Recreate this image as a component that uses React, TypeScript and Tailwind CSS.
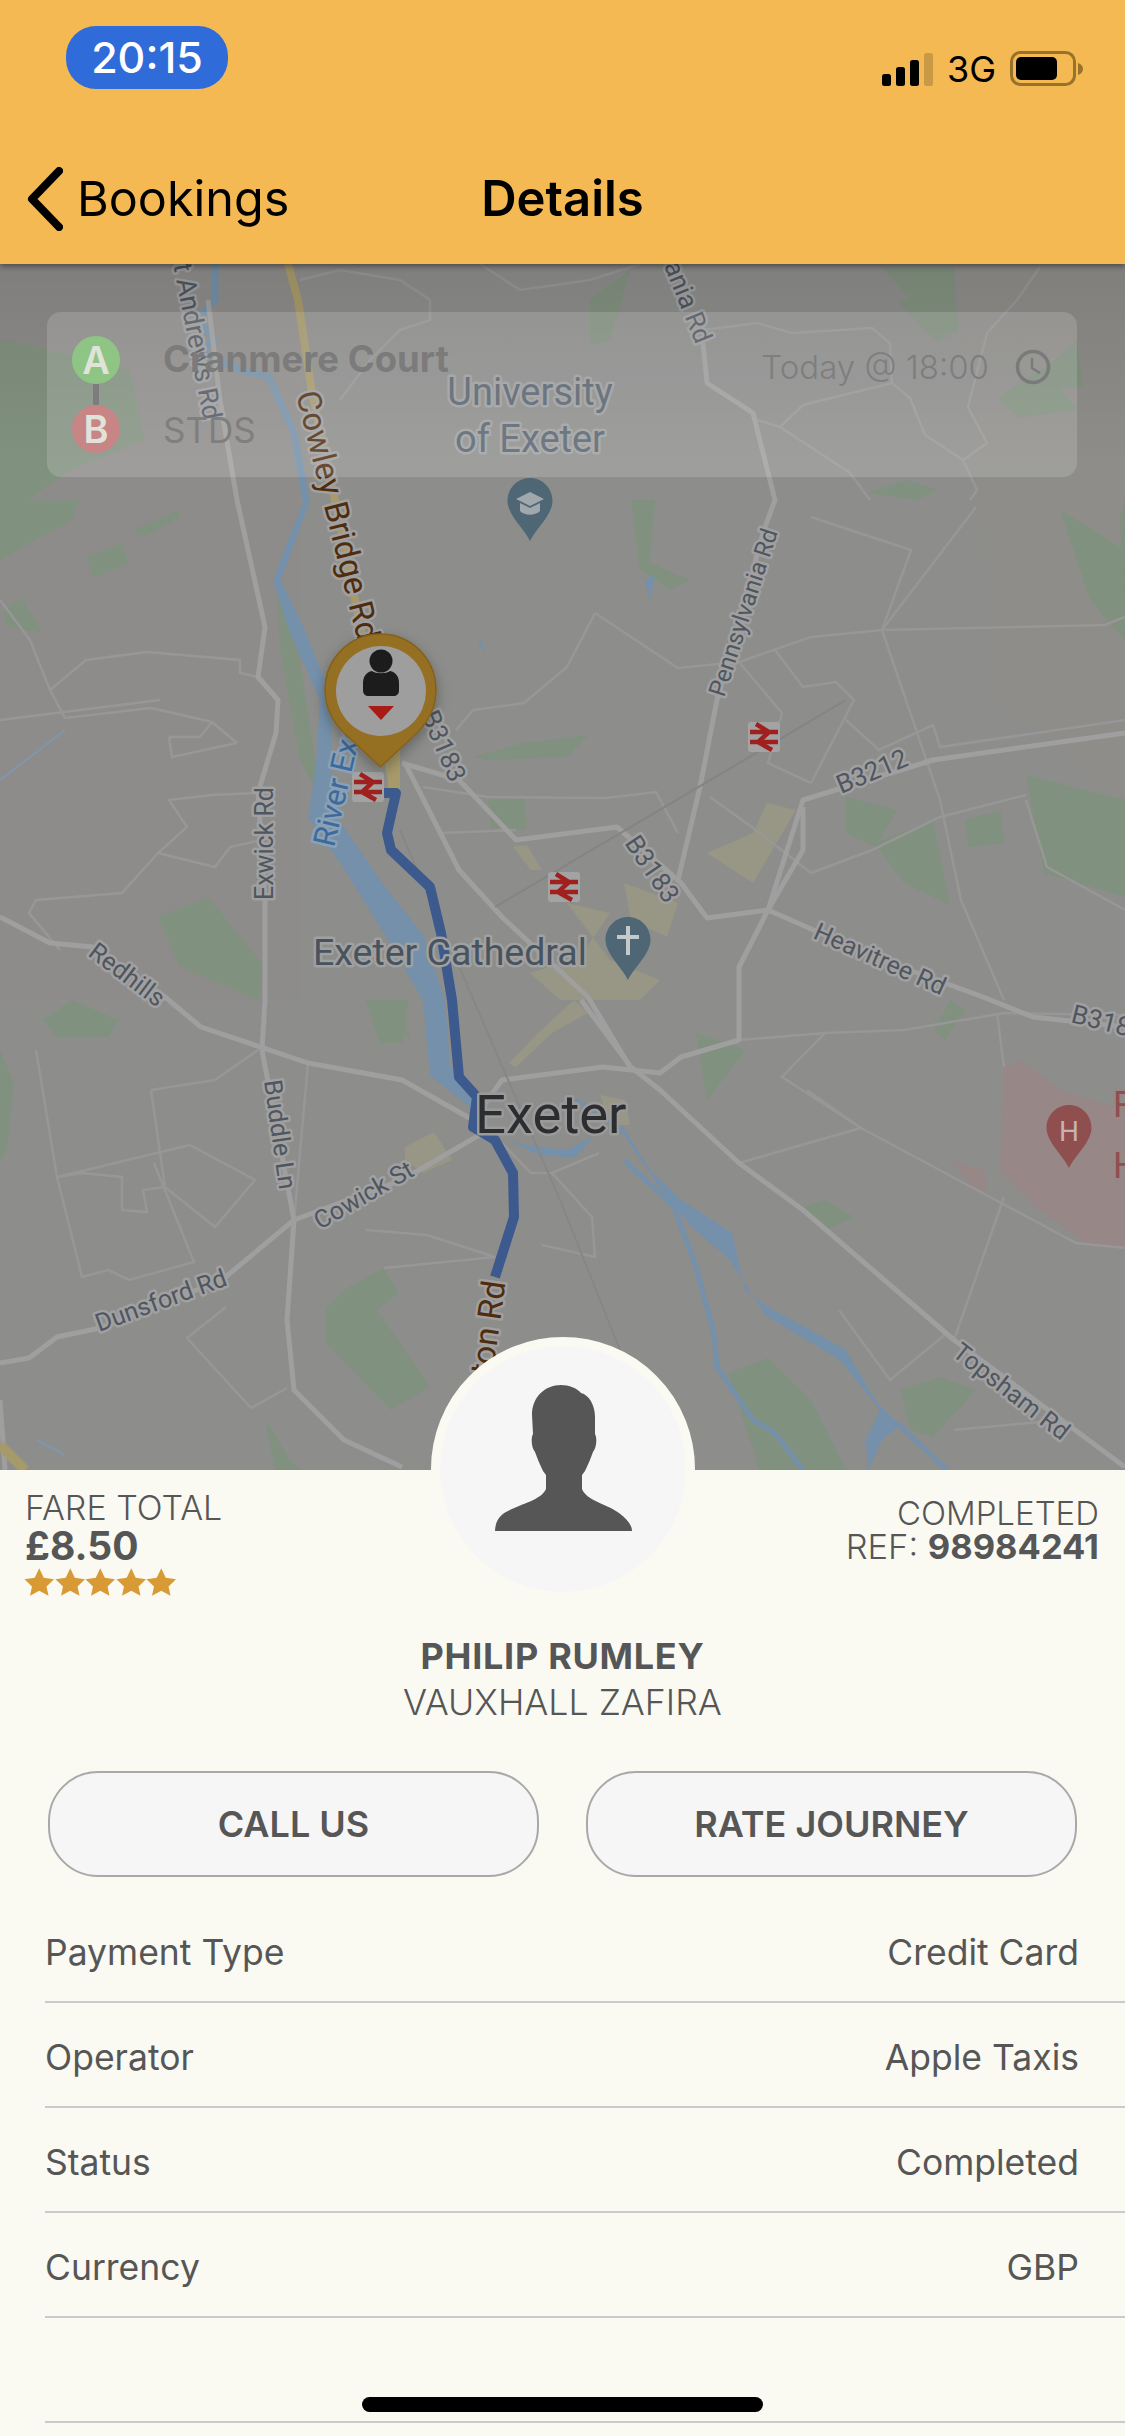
const rows = [
  { label: "Payment Type", value: "Credit Card" },
  { label: "Operator", value: "Apple Taxis" },
  { label: "Status", value: "Completed" },
  { label: "Currency", value: "GBP" },
  { label: "", value: "" },
];

// map shapes use screen coordinates, the svg viewBox starts at the map's top
const greens = [
  "0,340 30,345 130,370 145,440 70,470 0,520",
  "0,500 79,500 72,520 0,560",
  "86,557 122,543 129,563 93,578",
  "133,530 179,510 179,517 143,537",
  "4,610 22,598 43,633 7,627",
  "276,570 300,660 312,740 322,800 300,760 280,650",
  "631,500 655,500 650,563 690,580 670,590 640,570",
  "1060,510 1125,550 1125,640 1090,600",
  "846,797 897,810 875,847 846,833",
  "875,843 933,820 950,905 904,883",
  "965,820 1001,810 1004,843 968,847",
  "1026,775 1125,800 1125,897 1044,873",
  "488,800 524,798 527,830 491,828",
  "473,757 524,743 588,735 567,757 488,760",
  "158,917 208,897 265,967 258,1000 180,967",
  "43,1020 72,1000 118,1020 108,1037 57,1037",
  "344,1290 384,1268 398,1293 377,1310 430,1387 391,1410 326,1343 326,1308",
  "728,1373 768,1358 811,1400 846,1470 760,1470",
  "900,1390 940,1377 976,1390 933,1437 911,1430",
  "803,1207 825,1200 854,1217 825,1230",
  "696,1033 746,1050 707,1100",
  "0,1050 14,1083 7,1150 0,1160",
  "366,1000 409,1000 402,1043 380,1043",
  "882,267 954,267 958,333 911,300",
  "897,300 947,300 960,327 937,343",
  "998,398 1023,380 1047,367 1077,340 1083,387 1060,388 1077,410 1018,418",
  "867,493 907,480 937,490 917,500",
  "265,1420 290,1460 300,1470 275,1470",
  "590,300 630,270 610,340 590,345",
  "950,1000 965,1010 945,1040 935,1030",
  "1120,520 1125,500 1125,600",
  "385,1010 400,1000 410,1040",
];

const beiges = [
  "767,803 796,810 753,883 707,853 753,833",
  "513,847 527,845 542,870 531,870",
  "624,883 678,903 667,937 631,920",
  "567,903 610,913 580,957 530,973 560,1000 640,1000 660,980 610,960",
  "538,1033 574,1000 588,1013 552,1033 516,1067 509,1063",
  "405,1147 434,1132 452,1160 423,1173 405,1160",
  "600,1095 625,1100 630,1125 610,1125",
];

const mainRoads = [
  "237,500 265,627 258,677 278,700 276,733 258,793 265,900 265,1000 262,1050 294,1220 287,1320 294,1390 344,1440 402,1467",
  "208,300 220,400 237,500",
  "0,917 50,943 93,947 165,997 201,1027 308,1063 402,1080 473,1120",
  "0,1363 29,1358 57,1337 100,1328 222,1280 294,1220 402,1180 488,1130",
  "402,763 459,780 516,840 617,827 681,883 707,918 768,910 882,960 983,997 1033,1017 1125,1027",
  "768,910 803,800 933,760 1125,733",
  "803,807 803,850 768,910 739,967 739,1040 681,1057 660,1073 603,1067 502,1080 473,1120",
  "581,1000 631,1067 660,1090 739,1163 803,1210 954,1340 1125,1467",
  "703,343 707,383 753,413 775,500 764,530 717,700 700,787 678,880",
  "405,763 459,870 502,917 588,997 630,1067",
  "0,1400 5,1470",
];

const thinRoads = [
  "50,690 86,660 147,652 240,660 240,673 258,677",
  "50,690 65,718 151,708 212,722 237,743",
  "169,737 172,757 237,743",
  "212,722 200,737 169,737",
  "258,793 212,795 169,800 187,827 158,853 215,867 230,847 262,840",
  "158,853 122,893 36,900 29,913 60,950",
  "757,420 780,427 803,405 892,383 910,398 925,435 963,460 987,443 968,407 987,333 1017,300",
  "780,427 850,473 870,500",
  "703,330 757,323 792,333 872,328 890,343 892,383",
  "963,460 977,490 970,500",
  "739,662 811,637 882,630 1105,625 1125,617",
  "882,630 911,550 811,517",
  "882,630 976,507",
  "882,630 940,800 961,900 1004,1000",
  "1026,800 1047,867 1125,910",
  "595,613 678,668 739,662",
  "595,613 567,667 524,703 473,710 456,730",
  "739,662 782,713 768,763 811,783",
  "775,650 803,687 836,682 854,700 811,783",
  "846,720 879,750 933,725 940,747 1125,720",
  "423,787 488,797 606,798 656,792 678,833",
  "441,833 516,830",
  "710,797 760,833 811,873 872,850 940,817 1026,795",
  "151,1090 215,1080 258,1050",
  "151,1090 165,1187 143,1190 147,1212 122,1210 122,1177 82,1173 57,1177 36,1050",
  "190,1145 57,1177",
  "190,1145 255,1180 215,1227 165,1187",
  "57,1177 82,1277 108,1270 129,1280 194,1262 154,1163",
  "308,1063 294,1220",
  "427,1235 495,1257 384,1268",
  "427,1235 366,1230",
  "542,1245 595,1257 592,1217 552,1173 531,1173 502,1143",
  "599,1153 552,1173",
  "861,1128 739,1163",
  "861,1128 990,1197 1076,1243 1125,1248",
  "807,1090 861,1128 782,1077 825,1033 739,1040",
  "825,1033 904,1030 1004,1013 1125,1015",
  "1004,1067 997,1013",
  "1004,1197 954,1340",
  "226,1307 187,1338 251,1408 287,1388",
  "839,1310 890,1380 947,1333",
  "1062,1420 954,1430",
  "160,700 0,720",
  "0,600 30,640 50,690",
  "1017,300 1040,267",
  "300,280 340,270 400,280 430,300 430,320 400,330 370,360 340,400",
  "480,264 520,290 590,280 640,264",
];

const label = "font-[Roboto,'Liberation_Sans',sans-serif]";

const MapLabel = ({ x, y, r = 0, size = 25, fill = "#4f5660", anchor = "middle", halo = "#a0a0a0", children }: any) => (
  <text
    x={x}
    y={y}
    transform={`rotate(${r} ${x} ${y})`}
    fontSize={size}
    fill={fill}
    textAnchor={anchor}
    stroke={halo}
    strokeWidth={5}
    strokeLinejoin="round"
    paintOrder="stroke"
    className={label}
  >
    {children}
  </text>
);

const Rail = ({ x, y }: { x: number; y: number }) => (
  <g transform={`translate(${x} ${y})`}>
    <rect x="-16" y="-15" width="32" height="30" rx="3" fill="#a3a3a3" />
    <path d="M-14 -5H14M-14 5H14M-8 -13L5 -5L-6 5L8 13" stroke="#a01f1f" strokeWidth="4.5" fill="none" />
  </g>
);

const Teardrop = ({ x, y, fill }: { x: number; y: number; fill: string }) => (
  <path
    d={`M${x} ${y}c-12.500 0-22.500 10-22.500 23 0 14 17 28 22.500 40 5.500-12 22.500-26 22.500-40 0-13-10-23-22.500-23z`}
    fill={fill}
  />
);

const MapCanvas = () => (
  <svg viewBox="0 264 1125 1206" className="block h-full w-full">
    <defs>
      <linearGradient id="mapShade" x1="0" y1="0" x2="0" y2="1">
        <stop offset="0" stopColor="#000" stopOpacity="0.1" />
        <stop offset="1" stopColor="#000" stopOpacity="0" />
      </linearGradient>
      <filter id="pinShadow" x="-30%" y="-30%" width="160%" height="160%">
        <feDropShadow dx="0" dy="5" stdDeviation="7" floodColor="#000" floodOpacity="0.3" />
      </filter>
    </defs>
    <rect x="0" y="264" width="1125" height="1206" fill="#8d8d8c" />
    {/* warm washes of the land */}
    <polygon points="0,264 300,264 300,1000 0,1000" fill="#908d86" opacity="0.4" />
    <polygon points="960,264 1125,264 1125,800 1000,700" fill="#908e86" opacity="0.4" />
    <polygon points="1004,1067 1020,1060 1060,1090 1125,1110 1125,1250 1090,1245 1040,1210 1000,1170" fill="#978787" />
    <polygon points="954,1163 986,1170 986,1193 975,1190" fill="#978787" />
    {greens.map((p) => (
      <polygon key={p} points={p} fill="#81917f" />
    ))}
    {beiges.map((p) => (
      <polygon key={p} points={p} fill="#989785" />
    ))}
    {/* river */}
    <polyline points="215,264 215,300 197,320 215,340 200,350 240,370 269,377 294,433 306,500" fill="none" stroke="#7490aa" strokeWidth="7" strokeLinejoin="round" />
    <polygon points="304,500 273,580 290,633 320,700 316,767 308,817 345,870 385,935 423,1000 430,1075 473,1110 490,1115 450,1065 445,1000 423,935 380,880 337,817 330,767 333,700 306,633 281,580 310,500" fill="#7490aa" />
    <polygon points="505,1140 525,1145 567,1150 595,1135 575,1158 540,1155" fill="#7490aa" />
    <polygon points="567,1095 590,1105 624,1128 650,1170 681,1200 732,1233 745,1290 768,1307 846,1350 875,1400 900,1425 882,1440 868,1470 866,1440 880,1410 840,1360 765,1315 730,1260 690,1225 665,1195 624,1135" fill="#7490aa" />
    <polyline points="624,1160 674,1207 696,1267 714,1333 717,1367 753,1420 775,1433 803,1470" fill="none" stroke="#7490aa" strokeWidth="5" />
    <polyline points="897,1423 947,1470" fill="none" stroke="#7490aa" strokeWidth="5" />
    <polyline points="0,780 65,730" fill="none" stroke="#7f97ad" strokeWidth="2" />
    <polyline points="37,1440 65,1455" fill="none" stroke="#7f97ad" strokeWidth="2" />
    <polygon points="645,580 655,575 650,600" fill="#7490aa" />
    <polygon points="480,640 485,650 486,652 478,645" fill="#7490aa" />

    {thinRoads.map((p) => (
      <polyline key={p} points={p} fill="none" stroke="#979797" strokeWidth="2.500" />
    ))}
    {mainRoads.map((p) => (
      <polyline key={p} points={p} fill="none" stroke="#9f9f9f" strokeWidth="5" strokeLinejoin="round" />
    ))}
    <polyline points="495,907 846,700" fill="none" stroke="#848484" strokeWidth="2" />
    <polyline points="400,830 560,1200 640,1400" fill="none" stroke="#878787" strokeWidth="2" />

    {/* yellow A road */}
    <polyline points="288,264 298,300 312,393 335,500 365,650 392,780" fill="none" stroke="#a79a6a" strokeWidth="8" />
    <polyline points="394,750 394,795" fill="none" stroke="#a79a6a" strokeWidth="12" />
    <polyline points="0,1445 25,1470" fill="none" stroke="#a79a6a" strokeWidth="10" />

    {/* route */}
    <polyline
      points="383,793 396,793 387,833 391,850 430,887 441,933 452,1000 459,1077 477,1097 473,1127 495,1140 513,1173 514,1217 495,1277"
      fill="none"
      stroke="#3d5a8f"
      strokeWidth="10"
      strokeLinejoin="round"
    />

    <MapLabel x={187} y={335} r={79} size={27}>St Andrews Rd</MapLabel>
    <MapLabel x={327} y={518} r={76} size={33} fill="#4e2c0d">Cowley Bridge Rd</MapLabel>
    <MapLabel x={696} y={345} r={68} size={26} anchor="end">Pennsylvania Rd</MapLabel>
    <MapLabel x={724} y={698} r={-72} size={24} anchor="start">Pennsylvania Rd</MapLabel>
    <MapLabel x={421} y={715} r={67} size={26} anchor="start" >B3183</MapLabel>
    <MapLabel x={841} y={794} r={-23} size={26} anchor="start">B3212</MapLabel>
    <MapLabel x={624} y={843} r={56} size={26} anchor="start">B3183</MapLabel>
    <MapLabel x={812} y={938} r={24} anchor="start">Heavitree Rd</MapLabel>
    <MapLabel x={334} y={848} r={-77} size={31} fill="#3c6a9d" anchor="start" halo="#8aa0b4">River Exe</MapLabel>
    <MapLabel x={273} y={900} r={-90} anchor="start">Exwick Rd</MapLabel>
    <MapLabel x={87} y={955} r={37} anchor="start">Redhills</MapLabel>
    <MapLabel x={313} y={965} size={37.500} fill="#47535f" anchor="start">Exeter Cathedral</MapLabel>
    <MapLabel x={1070} y={1022} r={14} size={26} anchor="start">B318</MapLabel>
    <MapLabel x={475} y={1133} size={54.500} fill="#2c2d30" anchor="start" halo="#9a9a9a">Exeter</MapLabel>
    <MapLabel x={264} y={1081} r={82} anchor="start">Buddle Ln</MapLabel>
    <MapLabel x={320} y={1230} r={-30} anchor="start">Cowick St</MapLabel>
    <MapLabel x={99} y={1332} r={-20} anchor="start">Dunsford Rd</MapLabel>
    <MapLabel x={951} y={1355} r={38} anchor="start">Topsham Rd</MapLabel>
    <MapLabel x={477} y={1486} r={-82} size={33} fill="#4e2c0d" anchor="start">Alphington Rd</MapLabel>
    <MapLabel x={1113} y={1117} size={36} fill="#8f4f4f" anchor="start" halo="#978787">R</MapLabel>
    <MapLabel x={1113} y={1178} size={36} fill="#8f4f4f" anchor="start" halo="#978787">H</MapLabel>
    <MapLabel x={530} y={405} size={38} fill="#55626e">University</MapLabel>
    <MapLabel x={530} y={452} size={38} fill="#55626e">of Exeter</MapLabel>

    <Teardrop x={530} y={478} fill="#4f6675" />
    <path d="M530 492l14 7-14 7-14-7zM520 503v8c5 5 15 5 20 0v-8l-10 5z" fill="#a0a8ad" />
    <Teardrop x={628} y={917} fill="#4f6675" />
    <path d="M626 926h4v9h9v4h-9v16h-4v-16h-9v-4h9z" fill="#c4c9cc" />
    <Teardrop x={1069} y={1105} fill="#8f4f4f" />
    <text x={1069} y={1141} fontSize="28" fill="#c9b1b1" textAnchor="middle" className={label}>H</text>

    <Rail x={764} y={737} />
    <Rail x={368} y={787} />
    <Rail x={564} y={887} />

    {/* driver pin */}
    <g filter="url(#pinShadow)">
      <path d="M380.500 634c-31 0-55.500 25-55.500 56 0 18 8 32 19 43l36.500 34 36.500-34c11-11 19-25 19-43 0-31-24.500-56-55.500-56z" fill="#966f24" stroke="#84601e" strokeWidth="1.500" />
      <circle cx="381" cy="691" r="45" fill="#9e9e9e" />
      <circle cx="381" cy="661" r="11.500" fill="#1f1f1f" />
      <path d="M372 671c4 3 14 3 18 0 6 1 9 6 9 12v7c0 4-2 6-6 6h-24c-4 0-6-2-6-6v-7c0-6 3-11 9-12z" fill="#1f1f1f" />
      <path d="M368 706h26l-13 14z" fill="#a81c12" />
    </g>

    <rect x="0" y="264" width="1125" height="200" fill="url(#mapShade)" />
  </svg>
);

const Stars = () => (
  <div className="flex">
    {[0, 1, 2, 3, 4].map((i) => (
      <svg key={i} viewBox="0 0 31 28" className="h-[28px] w-[30.500px]">
        <path d="M15.500 0l4.600 9.800 10.400 1.300-7.600 7.400 2 9.500-9.400-5-9.400 5 2-9.500L.5 11.100l10.400-1.300z" fill="#d89a34" />
      </svg>
    ))}
  </div>
);

const font = "font-['Inter','Liberation_Sans',sans-serif]";

export default function App() {
  return (
    <div className={`relative h-[2436px] w-[1125px] overflow-hidden bg-[#fafaf3] ${font}`}>
      <header className="relative z-10 flex h-[264px] flex-col bg-[#f4b952] shadow-[0_2px_6px_rgba(0,0,0,0.45)]">
        <div className="flex h-[140px] items-start justify-between pl-[66px] pr-[41px] pt-[26px]">
          <div className="flex h-[63px] w-[162px] items-center justify-center rounded-[30px] bg-[#2f6bd9] text-[43px] font-medium text-white">
            20:15
          </div>
          <div className="mt-[25px] flex items-center">
            <svg viewBox="0 0 52 33" className="h-[33px] w-[52px]">
              <rect x="0" y="21" width="9" height="12" rx="2.500" fill="#000" />
              <rect x="14" y="14" width="9" height="19" rx="2.500" fill="#000" />
              <rect x="28" y="7" width="9" height="26" rx="2.500" fill="#000" />
              <rect x="42" y="0" width="9" height="33" rx="2.500" fill="#c89a44" />
            </svg>
            <span className="ml-[13px] text-[36px] leading-none text-black">3G</span>
            <svg viewBox="0 0 74 36" className="ml-[14px] h-[36px] w-[74px]">
              <rect x="1.500" y="1.500" width="63" height="32" rx="9" fill="none" stroke="#98722a" strokeWidth="3" />
              <rect x="6" y="6" width="41" height="23" rx="5" fill="#000" />
              <path d="M68 12c3 1 5 3 5 6s-2 5-5 6z" fill="#98722a" />
            </svg>
          </div>
        </div>
        <nav className="relative flex h-[124px] items-center">
          <div className="flex items-center pb-[6px] pl-[27px]">
            <svg viewBox="0 0 36 64" className="h-[64px] w-[36px]">
              <path d="M32 4L5 32l27 28" fill="none" stroke="#000" strokeWidth="8" strokeLinecap="round" strokeLinejoin="round" />
            </svg>
            <span className="ml-[14px] text-[48.500px] leading-none text-black">Bookings</span>
          </div>
          <span className="absolute inset-x-0 top-[34px] text-center text-[49px] font-semibold leading-none text-black">
            Details
          </span>
        </nav>
      </header>

      <section className="relative h-[1206px]">
        <MapCanvas />
        <div className="absolute left-[47px] top-[48px] flex h-[165px] w-[1030px] items-start justify-between rounded-[14px] bg-white/15 pl-[25px] pr-[26px] pt-[24px]">
          <div className="flex items-start">
            <div className="flex flex-col items-center">
              <span className="flex h-[48px] w-[48px] items-center justify-center rounded-full bg-[#8ec585] text-[38px] font-semibold leading-none text-[#dfe3da]">A</span>
              <span className="h-[21px] w-[6px] bg-[#7d7d7d]" />
              <span className="flex h-[48px] w-[48px] items-center justify-center rounded-full bg-[#c88585] text-[38px] font-semibold leading-none text-[#dfe3da]">B</span>
            </div>
            <div className="ml-[43px] flex flex-col">
              <span className="text-[36.500px] font-bold leading-[46px] text-[#7b7b7b]">Cranmere Court</span>
              <span className="mt-[25px] text-[35px] leading-[46px] text-[#7f7f7f]">STDS</span>
            </div>
          </div>
          <div className="flex items-center pt-[13px]">
            <span className="text-[33px] font-light leading-none text-[#7e7e7e]">Today @ 18:00</span>
            <svg viewBox="0 0 36 36" className="ml-[26px] h-[36px] w-[36px]">
              <circle cx="18" cy="18" r="15.500" fill="none" stroke="#7a7a7a" strokeWidth="3.500" />
              <path d="M17 9v10l8 5" fill="none" stroke="#7a7a7a" strokeWidth="2.500" />
            </svg>
          </div>
        </div>
      </section>

      <section className="relative text-[#565656]">
        <div className="absolute left-[431px] top-[-133px] flex h-[264px] w-[264px] items-end justify-center rounded-full border-[9px] border-[#fafaf3] bg-[#f6f6f6] pb-[61px]">
          <svg viewBox="0 0 137 146" className="h-[146px] w-[137px]">
            <path
              d="M66 0C74 0 82 3 86 8C94 10 100 20 100 32L100 49C102 52 102 62 98 67C96 72 94 78 90 86L87 90L87 104C92 116 110 118 124 128C132 134 137 140 137 146L0 146C0 138 4 130 13 126C28 118 46 115 51 104L51 90L48 86C44 78 42 72 40 67C36 62 36 52 38 49L37 30C37 12 50 0 66 0Z"
              fill="#565656"
            />
          </svg>
        </div>

        <div className="flex h-[140px] items-start justify-between pl-[25px] pr-[26px] pt-[19px]">
          <div>
            <p className="text-[34px] font-light leading-[38px]">FARE TOTAL</p>
            <p className="text-[39px] font-bold leading-[38px]">£8.50</p>
            <div className="mt-[3px] -ml-px">
              <Stars />
            </div>
          </div>
          <div className="pt-[5px] text-right">
            <p className="text-[33px] font-light leading-[38px]">COMPLETED</p>
            <p className="text-[34.500px] font-light leading-[30px]">
              REF: <span className="font-bold">98984241</span>
            </p>
          </div>
        </div>

        <p className="mt-[23px] text-center text-[36px] font-bold leading-[46px] tracking-[0.7px]">PHILIP RUMLEY</p>
        <p className="text-center text-[35.700px] font-light leading-[46px]">VAUXHALL ZAFIRA</p>

        <div className="mt-[46px] flex justify-between px-[48px]">
          <button className="h-[106px] w-[491px] rounded-[50px] border-2 border-[#a9a9a9] bg-[#f6f6f6] text-[36px] font-semibold">
            CALL US
          </button>
          <button className="h-[106px] w-[491px] rounded-[50px] border-2 border-[#a9a9a9] bg-[#f6f6f6] text-[36px] font-semibold">
            RATE JOURNEY
          </button>
        </div>

        <ul className="mt-[21px] pl-[45px]">
          {rows.map((row) => (
            <li key={row.label} className="flex h-[105px] items-center justify-between border-b-2 border-[#c9c9cf] pr-[46px] pt-[7px] text-[35.500px]">
              <span>{row.label}</span>
              <span>{row.value}</span>
            </li>
          ))}
        </ul>
      </section>

      <div className="absolute bottom-[24px] left-[362px] h-[15px] w-[401px] rounded-full bg-black" />
    </div>
  );
}
